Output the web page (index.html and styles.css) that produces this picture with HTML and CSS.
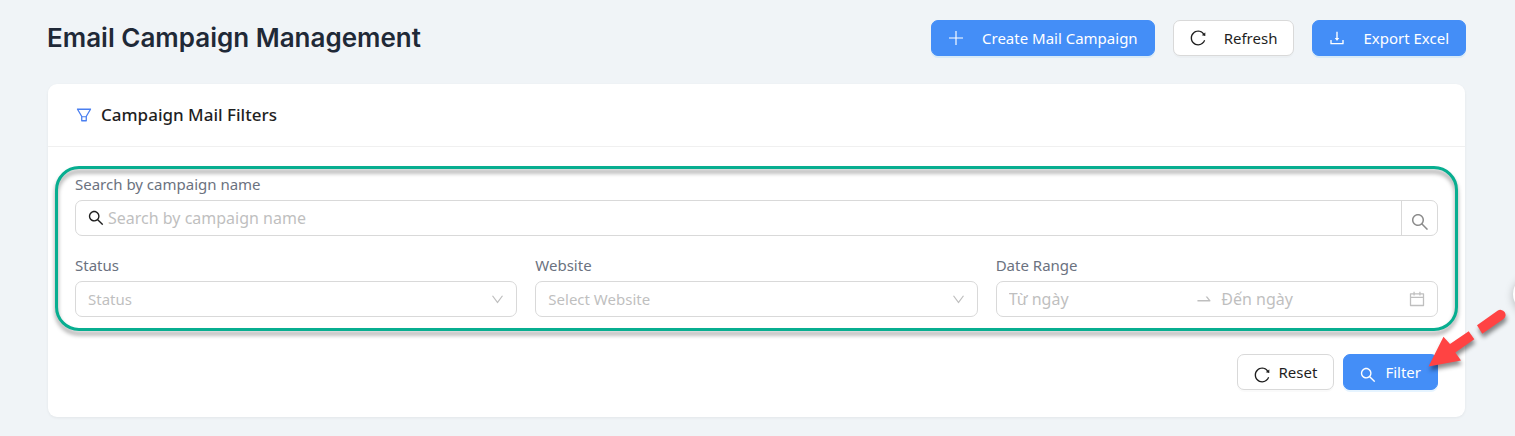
FILE: index.html
```html
<!DOCTYPE html>
<html lang="en">
<head>
<meta charset="utf-8">
<meta name="viewport" content="width=device-width, initial-scale=1">
<title>Email Campaign Management</title>
<link rel="stylesheet" href="styles.css">
</head>
<body>
<svg class="sprite" aria-hidden="true">
  <symbol id="i-search" viewBox="64 64 896 896"><path d="M909.6 854.5L649.9 594.8C690.2 542.7 712 479 712 412c0-80.2-31.3-155.4-87.9-212.1-56.6-56.7-132-87.9-212.1-87.9s-155.5 31.3-212.1 87.9C143.2 256.5 112 331.8 112 412c0 80.1 31.3 155.5 87.9 212.1C256.5 680.8 331.8 712 412 712c67 0 130.6-21.8 182.7-62l259.7 259.6a8.2 8.2 0 0011.6 0l43.6-43.5a8.2 8.2 0 000-11.6zM570.4 570.4C528 612.7 471.8 636 412 636s-116-23.3-158.4-65.6C211.3 528 188 471.8 188 412s23.3-116.1 65.6-158.4C296 211.3 352.2 188 412 188s116.1 23.2 158.4 65.6S636 352.2 636 412s-23.3 116.1-65.6 158.4z"/></symbol>
  <symbol id="i-reload" viewBox="64 64 896 896"><path d="M909.1 209.3l-56.4 44.1C775.8 155.1 656.2 92 521.9 92 290 92 102.3 279.5 102 511.5 101.7 743.7 289.8 932 521.9 932c181.3 0 335.8-115 394.6-276.1 1.5-4.2-.7-8.9-4.9-10.3l-56.7-19.5a8 8 0 00-10.1 4.8c-1.8 5-3.8 10-5.9 14.9-17.3 41-42.1 77.8-73.7 109.4A344.77 344.77 0 01655.9 829c-42.3 17.9-87.4 27-133.8 27-46.5 0-91.5-9.1-133.8-27A341.5 341.5 0 01279 755.2a342.16 342.16 0 01-73.7-109.4c-17.9-42.4-27-87.4-27-133.9s9.1-91.5 27-133.9c17.3-41 42.1-77.8 73.7-109.4 31.6-31.6 68.4-56.4 109.3-73.8 42.3-17.9 87.4-27 133.8-27 46.5 0 91.5 9.1 133.8 27a341.5 341.5 0 01109.3 73.8c9.9 9.9 19.2 20.4 27.8 31.4l-60.2 47a8 8 0 003 14.1l175.6 43c5 1.2 9.9-2.6 9.9-7.7l.8-180.9c-.1-6.6-7.8-10.3-13-6.2z"/></symbol>
  <symbol id="i-download" viewBox="64 64 896 896"><path d="M505.7 661a8 8 0 0012.6 0l112-141.7c4.1-5.2.4-12.9-6.3-12.9h-74.1V168c0-4.4-3.6-8-8-8h-60c-4.4 0-8 3.6-8 8v338.3H400c-6.7 0-10.4 7.7-6.3 12.9l112 141.8zM878 626h-60c-4.4 0-8 3.6-8 8v154H214V634c0-4.4-3.6-8-8-8h-60c-4.4 0-8 3.6-8 8v198c0 17.7 14.3 32 32 32h684c17.7 0 32-14.3 32-32V634c0-4.4-3.6-8-8-8z"/></symbol>
  <symbol id="i-plus" viewBox="64 64 896 896"><path d="M480 120h64v360h360v64H544v360h-64V544H120v-64h360z"/></symbol>
  <symbol id="i-down" viewBox="64 64 896 896"><path d="M884 256h-75c-5.1 0-9.9 2.5-12.9 6.6L512 654.2 227.9 262.6c-3-4.1-7.8-6.6-12.9-6.6h-75c-6.5 0-10.3 7.4-6.5 12.7l352.6 486.1c12.8 17.6 39 17.6 51.7 0l352.6-486.1c3.9-5.3.1-12.7-6.4-12.7z"/></symbol>
  <symbol id="i-filter" viewBox="64 64 896 896"><path d="M880.1 154H143.9c-24.5 0-39.8 26.7-27.5 48L349 597.4V838c0 17.7 14.2 32 31.8 32h262.4c17.6 0 31.8-14.3 31.8-32V597.4L907.7 202c12.2-21.3-3.1-48-27.6-48zM603.4 798H420.6V642h182.9v156zm9.6-236.6l-9.5 16.6h-183l-9.5-16.6L212.7 226h598.6L613 561.4z"/></symbol>
  <symbol id="i-calendar" viewBox="64 64 896 896"><path d="M880 184H712v-64c0-4.4-3.6-8-8-8h-56c-4.4 0-8 3.6-8 8v64H384v-64c0-4.4-3.6-8-8-8h-56c-4.4 0-8 3.6-8 8v64H144c-17.7 0-32 14.3-32 32v664c0 17.7 14.3 32 32 32h736c17.7 0 32-14.3 32-32V216c0-17.7-14.3-32-32-32zm-40 656H184V460h656v380zM184 392V256h128v48c0 4.4 3.6 8 8 8h56c4.4 0 8-3.6 8-8v-48h256v48c0 4.4 3.6 8 8 8h56c4.4 0 8-3.6 8-8v-48h128v136H184z"/></symbol>
  <symbol id="i-swap" viewBox="64 64 896 896"><path d="M873.1 596.2l-164-208A32 32 0 00684 376h-64.8c-6.7 0-10.4 7.7-6.3 13l144.3 183H152c-4.4 0-8 3.6-8 8v60c0 4.4 3.6 8 8 8h695.9c26.8 0 41.7-30.8 25.2-51.8z"/></symbol>
</svg>

<main class="page">
  <header class="page-header">
    <h1 class="title">Email Campaign Management</h1>
    <div class="actions">
      <button class="btn btn-primary btn-wide" type="button"><svg class="icon"><use href="#i-plus"/></svg>Create Mail Campaign</button>
      <button class="btn btn-wide" type="button"><svg class="icon"><use href="#i-reload"/></svg>Refresh</button>
      <button class="btn btn-primary btn-wide" type="button"><svg class="icon"><use href="#i-download"/></svg>Export Excel</button>
    </div>
  </header>

  <section class="card">
    <div class="card-head">
      <svg class="icon icon-filter"><use href="#i-filter"/></svg>
      <h2 class="card-title">Campaign Mail Filters</h2>
    </div>
    <form class="card-body">
      <div class="fields">
        <div class="field field-full">
          <label for="name">Search by campaign name</label>
          <div class="control search">
            <svg class="icon icon-lead"><use href="#i-search"/></svg>
            <input class="text" id="name" type="text" placeholder="Search by campaign name">
            <button class="search-btn" type="button" aria-label="Search"><svg class="icon"><use href="#i-search"/></svg></button>
          </div>
        </div>
        <div class="field">
          <label for="status">Status</label>
          <div class="control">
            <select class="select" id="status"><option>Status</option></select>
            <svg class="icon chevron"><use href="#i-down"/></svg>
          </div>
        </div>
        <div class="field">
          <label for="website">Website</label>
          <div class="control">
            <select class="select" id="website"><option>Select Website</option></select>
            <svg class="icon chevron"><use href="#i-down"/></svg>
          </div>
        </div>
        <div class="field">
          <label for="from">Date Range</label>
          <div class="control range">
            <input class="text" id="from" type="text" placeholder="Từ ngày">
            <svg class="icon"><use href="#i-swap"/></svg>
            <input class="text" type="text" placeholder="Đến ngày" aria-label="Đến ngày">
            <svg class="icon"><use href="#i-calendar"/></svg>
          </div>
        </div>
        <div class="highlight"></div>
      </div>
      <div class="form-actions">
        <button class="btn btn-low" type="reset"><svg class="icon"><use href="#i-reload"/></svg>Reset</button>
        <button class="btn btn-primary btn-low" type="button"><svg class="icon"><use href="#i-search"/></svg>Filter</button>
        <svg class="pointer" viewBox="1425 300 90 80" aria-hidden="true">
          <path d="M1428.5 366.5L1443.5 336.7L1450 344L1468.7 331.3L1474.3 339.3L1455.3 352.5L1461 360.5Z"/>
          <path d="M1477 325.3L1497.5 310.8A5 5 0 0 1 1503.5 319L1482.3 333.7Z"/>
        </svg>
      </div>
    </form>
  </section>
  <div class="edge-handle"></div>
</main>
</body>
</html>
```
FILE: styles.css
```css
* { box-sizing: border-box; }

body {
  margin: 0;
  background: #f0f4f7;
  color: #1f1f1f;
  font-family: "Noto Sans", "Open Sans", sans-serif;
  font-size: 15px;
  line-height: 24px;
}

.sprite { position: absolute; width: 0; height: 0; }

.page {
  position: relative;
  min-height: 100vh;
  padding: 20px 49px 19px 47px;
  overflow: hidden;
}

.icon { flex: none; width: 16px; height: 16px; fill: currentColor; }

.page-header {
  display: flex;
  align-items: center;
  justify-content: space-between;
  gap: 18px;
  margin-bottom: 28px;
}

.title {
  margin: 0;
  color: #1f2937;
  font-family: Inter, sans-serif;
  font-size: 26px;
  font-weight: 600;
  line-height: 36px;
}

.actions { display: flex; gap: 18px; }

.btn {
  display: inline-flex;
  align-items: center;
  gap: 9px;
  height: 36px;
  padding: 0 16px;
  border: 1px solid #d9d9d9;
  border-radius: 7px;
  background: #fff;
  color: #1f1f1f;
  font: inherit;
  box-shadow: 0 2px 0 rgba(0, 0, 0, 0.02);
}

.btn-primary {
  border-color: #448ef7;
  background: #448ef7;
  color: #fff;
  box-shadow: 0 2px 0 rgba(5, 145, 255, 0.1);
}

.btn-wide { gap: 18px; }
.btn-low .icon { margin-top: 6px; }

.card {
  margin: 0 1px;
  border-radius: 9px;
  background: #fff;
  box-shadow: 0 1px 3px rgba(0, 0, 0, 0.06);
}

.card-head {
  display: flex;
  align-items: center;
  gap: 9px;
  height: 63px;
  padding: 0 28px;
  border-bottom: 1px solid #f0f0f0;
}

.icon-filter { color: #4a7ff0; }

.card-title { margin: 0; font-size: 17px; font-weight: 500; }

.card-body { padding: 25px 27px 27px; }

.fields {
  position: relative;
  display: grid;
  grid-template-columns: repeat(3, minmax(0, 1fr));
  gap: 17px 18px;
}

.field { display: flex; flex-direction: column; gap: 4px; color: #6b7280; }
.field-full { grid-column: 1 / -1; }

.control {
  position: relative;
  display: flex;
  align-items: center;
  height: 36px;
  border: 1px solid #d9d9d9;
  border-radius: 7px;
  background: #fff;
  color: #bfbfbf;
}

.text {
  flex: 1;
  min-width: 0;
  padding: 0;
  border: 0;
  outline: 0;
  background: transparent;
  color: #1f1f1f;
  font: inherit;
  font-size: 16px;
}

.text::placeholder { color: #bfbfbf; opacity: 1; }

.search { gap: 4px; padding-left: 12px; }
.icon-lead { color: #1f1f1f; }

.search-btn {
  display: flex;
  align-items: center;
  justify-content: center;
  align-self: stretch;
  width: 36px;
  padding: 8px 0 0;
  border: 0;
  border-left: 1px solid #d9d9d9;
  background: transparent;
  color: #8c8c8c;
}

.search-btn .icon { width: 18px; height: 18px; }

.select {
  width: 100%;
  height: 100%;
  padding: 0 36px 0 12px;
  border: 0;
  border-radius: 7px;
  outline: 0;
  appearance: none;
  background: transparent;
  color: #bfbfbf;
  font: inherit;
}

.chevron {
  position: absolute;
  right: 12px;
  width: 13px;
  height: 13px;
  pointer-events: none;
}

.range { gap: 9px; padding: 0 12px; }

.highlight {
  position: absolute;
  inset: -6px -20px -14px;
  border: 3px solid #07ae90;
  border-radius: 24px;
  filter: drop-shadow(0 4px 2px rgba(0, 0, 0, 0.4));
  pointer-events: none;
}

.form-actions {
  position: relative;
  display: flex;
  justify-content: flex-end;
  gap: 9px;
  margin-top: 37px;
}

.pointer {
  position: absolute;
  right: -77px;
  bottom: 10px;
  width: 90px;
  height: 80px;
  fill: #ff4343;
  filter: drop-shadow(1px 4px 2px rgba(0, 0, 0, 0.45));
  pointer-events: none;
}

.edge-handle {
  position: absolute;
  top: 276px;
  right: -34px;
  width: 36px;
  height: 36px;
  border-radius: 50%;
  background: #fff;
  box-shadow: 0 2px 8px rgba(0, 0, 0, 0.25);
}
```
